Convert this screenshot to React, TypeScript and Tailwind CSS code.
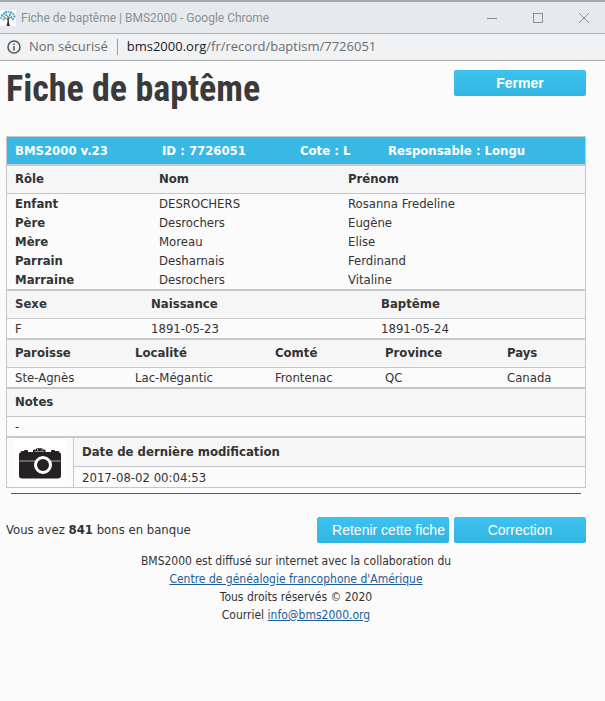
import type { ReactNode } from 'react';

const roles = [
  { role: 'Enfant', nom: 'DESROCHERS', prenom: 'Rosanna Fredeline' },
  { role: 'Père', nom: 'Desrochers', prenom: 'Eugène' },
  { role: 'Mère', nom: 'Moreau', prenom: 'Elise' },
  { role: 'Parrain', nom: 'Desharnais', prenom: 'Ferdinand' },
  { role: 'Marraine', nom: 'Desrochers', prenom: 'Vitaline' },
];

const table = 'w-full table-fixed border-separate border-spacing-0 border border-[#c6c7c9] text-left';
const th = 'h-7 border-b border-[#c6c7c9] bg-[#f6f6f6] pt-0 pb-0.5 pl-2 font-bold';
const td = 'h-[19px] py-0 pl-2';
const blueTh = 'h-[27px] bg-[#38b9e5] py-0 pl-2 font-bold text-white';
const buttonBase = 'h-[26px] w-[132px] rounded-xs bg-linear-to-b from-[#3cc3f0] to-[#33b4e0] font-[Liberation_Sans,Arial,sans-serif] text-sm whitespace-nowrap text-white';

const FavIcon = () => (
  <svg className="h-4 w-4 bg-white" viewBox="0 0 16 16" fill="none">
    <path d="M6.500 16c1-3 1.100-5 1-8h1.300c0 3 0 5 1.200 8z" fill="#333" />
    <path d="M8.200 10C6 8 5 7.500 3 6.500M8.400 9L12.500 6M8.200 8L6 3.500M8.400 8L10.500 3M5.500 8.200L3.500 9.500M10.500 7.500L13 8.800" stroke="#333" strokeWidth=".7" />
    <g fill="#45aed3">
      <circle cx="2" cy="5.500" r="1.300" /><circle cx="1" cy="8" r="1" /><circle cx="3.500" cy="9.500" r="1.100" />
      <circle cx="4" cy="3.500" r="1.200" /><circle cx="6" cy="2" r="1.200" /><circle cx="8.500" cy="1.800" r="1" />
      <circle cx="11" cy="2.500" r="1.300" /><circle cx="13.500" cy="4" r="1.100" /><circle cx="14.500" cy="6.500" r="1.200" />
      <circle cx="13" cy="9" r="1.200" /><circle cx="5.500" cy="5.500" r=".8" /><circle cx="10.500" cy="5" r=".8" />
    </g>
  </svg>
);

const CameraIcon = () => (
  <svg className="h-[47px] w-[50px] bg-white" viewBox="0 0 50 47">
    <g fill="#262122">
      <rect x="9" y="11" width="4" height="3" rx="1" />
      <rect x="36" y="11" width="4" height="3" rx="1" />
      <rect x="6" y="12" width="4" height="2" rx=".5" />
      <rect x="40" y="12" width="4" height="2" rx=".5" />
      <path d="M18 13v-1.500q0-1 1.500-1h1.500q0-1.300 1.500-1.300h4q1.500 0 1.500 1.300h1q1.500 0 1.500 1V13z" />
      <rect x="4" y="13" width="42" height="26.500" rx="3" />
    </g>
    <path d="M19.500 12.500h9.500" stroke="#aaa" strokeWidth=".8" />
    <path d="M22.500 10v1.500M27 10v1.500" stroke="#ddd" strokeWidth=".8" />
    <path d="M4 22h42" stroke="#b9b9b9" strokeWidth=".9" />
    <circle cx="28" cy="26" r="7.500" fill="#262122" stroke="#fff" strokeWidth="3" />
  </svg>
);

const Button = ({ children, className }: { children: ReactNode; className?: string }) => (
  <button type="button" className={`${buttonBase} ${className ?? ''}`}>{children}</button>
);

const WindowBar = () => (
  <header className="font-[Open_Sans,Noto_Sans,sans-serif]">
    <div className="flex h-[34px] items-center justify-between border-t-2 border-b border-t-[#a3a8ac] border-b-[#b0b2b4] bg-[#e6eaed] text-xs text-[#8b8f92]">
      <div className="flex items-center gap-[5px]">
        <FavIcon />
        <span className="font-[Roboto,sans-serif]">Fiche de baptême | BMS2000 - Google Chrome</span>
      </div>
      <div className="flex gap-9 pr-4">
        <button type="button" aria-label="Réduire">
          <svg className="h-[10px] w-[10px]" viewBox="0 0 10 10" stroke="currentColor"><path d="M0 5.500h10" /></svg>
        </button>
        <button type="button" aria-label="Agrandir">
          <svg className="h-[10px] w-[10px]" viewBox="0 0 10 10" fill="none" stroke="currentColor"><rect x=".5" y=".5" width="9" height="9" /></svg>
        </button>
        <button type="button" aria-label="Fermer la fenêtre">
          <svg className="h-[10px] w-[10px]" viewBox="0 0 10 10" stroke="currentColor"><path d="M0 0l10 10M10 0L0 10" /></svg>
        </button>
      </div>
    </div>
    <div className="flex h-[27px] items-center border-b border-[#a9abad] bg-[#f1f2f4] pl-[7px] text-[13px] text-[#6a6d70]">
      <svg className="mr-2 h-[14px] w-[14px]" viewBox="0 0 14 14" fill="none" stroke="#555" strokeWidth="1.500">
        <circle cx="7" cy="7" r="6" />
        <path d="M7 6v4.500M7 3.500V5" />
      </svg>
      <span>Non sécurisé</span>
      <span className="mx-[9px] h-4 w-px bg-[#9a9c9e]" />
      <span><span className="text-[#202124]">bms2000.org</span>/fr/record/baptism/7726051</span>
    </div>
  </header>
);

export default function App() {
  return (
    <div className="min-h-screen bg-[#fbfbfb] font-[DejaVu_Sans_Condensed,DejaVu_Sans,sans-serif] text-[13px] text-[#333]">
      <WindowBar />
      <main className="pr-[19px] pl-[6px]">
        <div className="flex h-[75px] items-start justify-between">
          <h1 className="pt-2 font-[Roboto_Condensed,Open_Sans_Condensed,sans-serif] text-4xl font-bold text-[#3a3a3a]">Fiche de baptême</h1>
          <Button className="mt-[9px] font-bold">Fermer</Button>
        </div>

        <table className={table}>
          <thead>
            <tr>
              <th className={`${blueTh} w-[147px]`}>BMS2000 v.23</th>
              <th className={`${blueTh} w-[138px]`}>ID : 7726051</th>
              <th className={`${blueTh} w-[88px]`}>Cote : L</th>
              <th className={blueTh}>Responsable : Longu</th>
            </tr>
          </thead>
        </table>

        <table className={table}>
          <thead>
            <tr>
              <th className={`${th} w-36`}>Rôle</th>
              <th className={`${th} w-[189px]`}>Nom</th>
              <th className={th}>Prénom</th>
            </tr>
          </thead>
          <tbody className="leading-[19px]">
            {roles.map((r) => (
              <tr key={r.role}>
                <th scope="row" className={`${td} font-bold`}>{r.role}</th>
                <td className={td}>{r.nom}</td>
                <td className={td}>{r.prenom}</td>
              </tr>
            ))}
          </tbody>
        </table>

        <table className={table}>
          <thead>
            <tr>
              <th className={`${th} w-[136px]`}>Sexe</th>
              <th className={`${th} w-[230px]`}>Naissance</th>
              <th className={th}>Baptême</th>
            </tr>
          </thead>
          <tbody className="leading-[19px]">
            <tr>
              <td className={td}>F</td>
              <td className={td}>1891-05-23</td>
              <td className={td}>1891-05-24</td>
            </tr>
          </tbody>
        </table>

        <table className={table}>
          <thead>
            <tr>
              <th className={`${th} w-[120px]`}>Paroisse</th>
              <th className={`${th} w-[140px]`}>Localité</th>
              <th className={`${th} w-[110px]`}>Comté</th>
              <th className={`${th} w-[122px]`}>Province</th>
              <th className={th}>Pays</th>
            </tr>
          </thead>
          <tbody className="leading-[19px]">
            <tr>
              <td className={td}>Ste-Agnès</td>
              <td className={td}>Lac-Mégantic</td>
              <td className={td}>Frontenac</td>
              <td className={td}>QC</td>
              <td className={td}>Canada</td>
            </tr>
          </tbody>
        </table>

        <table className={table}>
          <thead>
            <tr><th className={th}>Notes</th></tr>
          </thead>
          <tbody className="leading-[19px]">
            <tr><td className={td}>-</td></tr>
          </tbody>
        </table>

        <table className={table}>
          <tbody className="leading-[19px]">
            <tr>
              <td rowSpan={2} className="w-[67px] border-r border-[#c6c7c9] py-0 pl-2"><CameraIcon /></td>
              <th className={`${th} h-[29px]`}>Date de dernière modification</th>
            </tr>
            <tr>
              <td className="h-5 py-0 pl-2">2017-08-02 00:04:53</td>
            </tr>
          </tbody>
        </table>

        <hr className="mx-[5px] mt-[5px] border-[#58595b]" />

        <div className="mt-[23px] flex items-center justify-between">
          <p>Vous avez <b>841</b> bons en banque</p>
          <div className="flex gap-[5px]">
            <Button className="pl-[11px]">Retenir cette fiche</Button>
            <Button>Correction</Button>
          </div>
        </div>

        <footer className="mt-[9px] text-center text-xs leading-[18px]">
          <p>BMS2000 est diffusé sur internet avec la collaboration du</p>
          <p><a href="#centre" className="text-[#1b5e99] underline">Centre de généalogie francophone d'Amérique</a></p>
          <p>Tous droits réservés © 2020</p>
          <p>Courriel <a href="mailto:info@bms2000.org" className="text-[#1b5e99] underline">info@bms2000.org</a></p>
        </footer>
      </main>
    </div>
  );
}
